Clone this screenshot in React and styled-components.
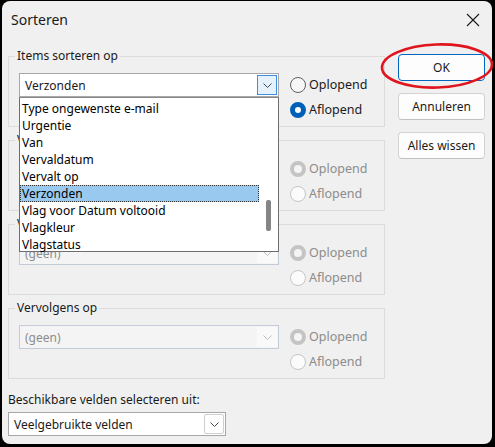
import React from "react";
import styled, { createGlobalStyle, css } from "styled-components";

const GlobalStyle = createGlobalStyle`
  html, body {
    margin: 0;
    padding: 0;
    background: #000;
  }
  body {
    font-family: "Noto Sans", "Open Sans", sans-serif;
    font-size: 12px;
    color: #000;
  }
`;

const Window = styled.div`
  position: relative;
  margin: 1px 0 0 2px;
  width: 490px;
  height: 443px;
  background: #f0f0f0;
  border-radius: 8px;
  overflow: visible;
`;

const TitleBar = styled.div`
  height: 37px;
  display: flex;
  align-items: center;
  justify-content: space-between;
  padding: 0 12px 0 9px;
`;

const Title = styled.span`
  font-size: 14px;
  color: #1a1a1a;
`;

const CloseButton = styled.div`
  width: 14px;
  height: 14px;
  display: flex;
  align-items: center;
  justify-content: center;
`;

const Body = styled.div`
  display: flex;
  padding: 11px 0 0 6px;
`;

const LeftColumn = styled.div`
  width: 377px;
  display: flex;
  flex-direction: column;
  gap: 6px;
`;

const Group = styled.fieldset`
  margin: 0;
  padding: 10px 10px 4px 10px;
  border: 1px solid #dcdcdc;
  height: 78px;
  box-sizing: border-box;
  min-width: 0;
`;

const Legend = styled.legend`
  padding: 0 2px;
  margin-left: -4px;
  line-height: 14px;
  font-size: 12px;
  color: #1a1a1a;
`;

const GroupRow = styled.div`
  display: flex;
  align-items: flex-start;
  gap: 11px;
`;

const ComboWrap = styled.div`
  position: relative;
  width: ${(p) => p.$width}px;
  flex: none;
`;

const Combo = styled.div`
  height: 24px;
  box-sizing: border-box;
  display: flex;
  align-items: center;
  justify-content: space-between;
  padding: 0 1px 0 5px;
  border: 1px solid #a8a8a8;
  background: #fff;
  color: #1a1a1a;
  ${(p) =>
    p.$disabled &&
    css`
      border-color: #c3cbd8;
      background: #f4f4f4;
      color: #8c8c8c;
    `}
`;

const ArrowBox = styled.div`
  width: 20px;
  height: 20px;
  box-sizing: border-box;
  display: flex;
  align-items: center;
  justify-content: center;
  border: 1px solid transparent;
  ${(p) =>
    p.$variant === "active" &&
    css`
      border-color: #3d8ee0;
      background: #e5f1fb;
    `}
  ${(p) =>
    p.$variant === "boxed" &&
    css`
      border-color: #cfcfcf;
      border-radius: 2px;
    `}
  ${(p) =>
    p.$variant === "disabled" &&
    css`
      background: #f9f9f9;
    `}
`;

const DropList = styled.div`
  position: absolute;
  top: 100%;
  left: 0;
  width: 100%;
  height: 155px;
  box-sizing: border-box;
  border: 1px solid #6e6e6e;
  border-top-color: #8a8a8a;
  background: #fff;
  z-index: 5;
  display: flex;
`;

const ListItems = styled.div`
  flex: 1;
  padding-top: 2px;
`;

const ListItem = styled.div`
  height: 17px;
  line-height: 17px;
  padding-left: 2px;
  color: #000;
  ${(p) =>
    p.$selected &&
    css`
      background: #99c9ef;
      outline: 1px dotted #333;
      outline-offset: -1px;
    `}
`;

const ScrollTrack = styled.div`
  width: 19px;
  display: flex;
  justify-content: center;
  padding-top: 102px;
  box-sizing: border-box;
`;

const ScrollThumb = styled.div`
  width: 5px;
  height: 31px;
  border-radius: 2px;
  background: #858585;
`;

const RadioColumn = styled.div`
  display: flex;
  flex-direction: column;
  margin-top: -1px;
`;

const RadioRow = styled.div`
  height: 25px;
  display: flex;
  align-items: center;
  gap: 3px;
  color: ${(p) => (p.$disabled ? "#8c8c8c" : "#1a1a1a")};
  font-size: 12.5px;
`;

const RadioCircle = styled.span`
  width: 16px;
  height: 16px;
  box-sizing: border-box;
  border-radius: 50%;
  border: 1px solid #5f5f5f;
  background: #f7f7f7;
  ${(p) =>
    p.$checked &&
    css`
      border: 5px solid #005fb8;
      background: #fff;
    `}
  ${(p) =>
    p.$disabled &&
    css`
      border: 1px solid #c6c6c6;
      background: #fbfbfb;
    `}
  ${(p) =>
    p.$disabled &&
    p.$checked &&
    css`
      border: 4px solid #c4c4c4;
      background: #f4f4f4;
    `}
`;

const FieldLabel = styled.div`
  margin-top: 8px;
  line-height: 14px;
  color: #1a1a1a;
`;

const FooterCombo = styled.div`
  margin-top: 5px;
`;

const ButtonColumn = styled.div`
  margin-left: 13px;
  margin-top: 5px;
  width: 87px;
  display: flex;
  flex-direction: column;
  gap: 12px;
`;

const DialogButton = styled.div`
  height: 27px;
  box-sizing: border-box;
  display: flex;
  align-items: center;
  justify-content: center;
  background: #fdfdfd;
  border: 1px solid #d3d3d3;
  border-bottom-color: #c2c2c2;
  border-radius: 4px;
  color: #1a1a1a;
  ${(p) =>
    p.$default &&
    css`
      border-color: #0067c0;
    `}
`;

const Annotation = styled.svg`
  position: absolute;
  left: 378px;
  top: 41px;
  overflow: visible;
`;

const Chevron = ({ color = "#444" }) => (
  <svg width="9" height="5" viewBox="0 0 9 5">
    <path d="M0.5 0.5 L4.5 4.5 L8.5 0.5" fill="none" stroke={color} strokeWidth="1" />
  </svg>
);

const Radios = ({ checked, disabled }) => (
  <RadioColumn>
    {["Oplopend", "Aflopend"].map((label, i) => (
      <RadioRow key={label} $disabled={disabled}>
        <RadioCircle $checked={checked === i} $disabled={disabled} />
        {label}
      </RadioRow>
    ))}
  </RadioColumn>
);

const items = [
  "Type ongewenste e-mail",
  "Urgentie",
  "Van",
  "Vervaldatum",
  "Vervalt op",
  "Verzonden",
  "Vlag voor Datum voltooid",
  "Vlagkleur",
  "Vlagstatus",
];

const App = () => {
  return (
    <>
      <GlobalStyle />
      <Window>
        <TitleBar>
          <Title>Sorteren</Title>
          <CloseButton>
            <svg width="14" height="14" viewBox="0 0 14 14">
              <path d="M1 1 L13 13 M13 1 L1 13" stroke="#1a1a1a" strokeWidth="1.1" />
            </svg>
          </CloseButton>
        </TitleBar>
        <Body>
          <LeftColumn>
            <Group>
              <Legend>Items sorteren op</Legend>
              <GroupRow>
                <ComboWrap $width={260}>
                  <Combo>
                    Verzonden
                    <ArrowBox $variant="active">
                      <Chevron />
                    </ArrowBox>
                  </Combo>
                  <DropList>
                    <ListItems>
                      {items.map((it) => (
                        <ListItem key={it} $selected={it === "Verzonden"}>
                          {it}
                        </ListItem>
                      ))}
                    </ListItems>
                    <ScrollTrack>
                      <ScrollThumb />
                    </ScrollTrack>
                  </DropList>
                </ComboWrap>
                <Radios checked={1} />
              </GroupRow>
            </Group>
            {[0, 1, 2].map((n) => (
              <Group key={n}>
                <Legend>Vervolgens op</Legend>
                <GroupRow>
                  <ComboWrap $width={260}>
                    <Combo $disabled>
                      (geen)
                      <ArrowBox $variant="disabled">
                        <Chevron color="#bdbdbd" />
                      </ArrowBox>
                    </Combo>
                  </ComboWrap>
                  <Radios checked={0} disabled />
                </GroupRow>
              </Group>
            ))}
            <div>
              <FieldLabel>Beschikbare velden selecteren uit:</FieldLabel>
              <FooterCombo>
                <ComboWrap $width={218}>
                  <Combo>
                    Veelgebruikte velden
                    <ArrowBox $variant="boxed">
                      <Chevron />
                    </ArrowBox>
                  </Combo>
                </ComboWrap>
              </FooterCombo>
            </div>
          </LeftColumn>
          <ButtonColumn>
            <DialogButton $default>OK</DialogButton>
            <DialogButton>Annuleren</DialogButton>
            <DialogButton>Alles wissen</DialogButton>
          </ButtonColumn>
        </Body>
        <Annotation width="114" height="48" viewBox="0 0 114 48">
          <ellipse cx="57" cy="24" rx="55" ry="21.5" fill="none" stroke="#e0141c" strokeWidth="2.6" transform="rotate(-2 57 24)" />
        </Annotation>
      </Window>
    </>
  );
};

export default App;
